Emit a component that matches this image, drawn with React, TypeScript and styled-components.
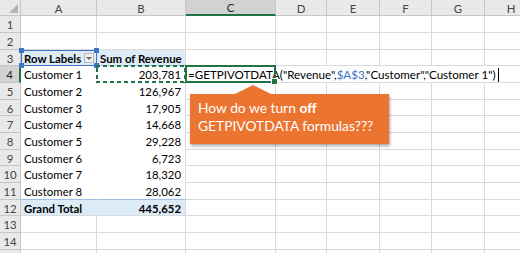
import React from 'react';
import styled, { createGlobalStyle, css } from 'styled-components';

const Global = createGlobalStyle`
  html, body { margin: 0; padding: 0; background: #ffffff; }
  body { width: 520px; height: 253px; overflow: hidden; }
`;

const GREEN = '#217346';
const GRID = '#dadada';
const HEAD_LINE = '#c6c6c6';
const PIVOT_FILL = '#ddebf7';
const PIVOT_LINE = '#9bc2e6';

const Viewport = styled.div`
  width: 520px;
  height: 253px;
  overflow: hidden;
`;

const Sheet = styled.div`
  position: relative;
  width: 538px;
  display: grid;
  grid-template-columns: 21px 76px 89px 90px 51px 53px 52px 53px 53px;
  grid-template-rows: 16px repeat(5, 17px 17px 16px);
  font-family: Lato, 'Liberation Sans', sans-serif;
  font-size: 11.4px;
  color: #000;
`;

const headBase = css`
  box-sizing: border-box;
  display: flex;
  align-items: center;
  justify-content: center;
  background: #e9e9e9;
  color: #444;
  border-right: 1px solid ${HEAD_LINE};
  border-bottom: 1px solid ${HEAD_LINE};
`;

const Corner = styled.div`
  ${headBase};
  position: relative;
  &::after {
    content: '';
    position: absolute;
    right: 2px;
    bottom: 2px;
    border-left: 9px solid transparent;
    border-bottom: 9px solid #b4b4b4;
  }
`;

const ColHead = styled.div<{ $active?: boolean }>`
  ${headBase};
  padding-top: 1px;
  ${(p) =>
    p.$active &&
    css`
      background: #d2d2d2;
      border-bottom: 2px solid ${GREEN};
      color: #262626;
    `}
`;

const RowHead = styled.div<{ $active?: boolean }>`
  ${headBase};
  padding-top: 1px;
  ${(p) =>
    p.$active &&
    css`
      background: #d2d2d2;
      border-right: 2px solid ${GREEN};
      color: #262626;
    `}
`;

type Kind = 'plain' | 'pivotHead' | 'pivotBody' | 'total';

const Cell = styled.div<{
  $kind?: Kind;
  $align?: 'left' | 'right';
  $bold?: boolean;
  $noRight?: boolean;
  $closeBody?: boolean;
}>`
  position: relative;
  box-sizing: border-box;
  display: flex;
  align-items: center;
  justify-content: ${(p) => (p.$align === 'right' ? 'flex-end' : 'flex-start')};
  padding: 1px 4px 0 3px;
  white-space: nowrap;
  font-weight: ${(p) => (p.$bold ? 700 : 400)};
  border-right: 1px solid ${(p) => (p.$noRight ? 'transparent' : GRID)};
  border-bottom: 1px solid ${GRID};
  ${(p) =>
    p.$kind === 'pivotHead' &&
    css`
      background: ${PIVOT_FILL};
      border-bottom-color: ${PIVOT_LINE};
    `}
  ${(p) =>
    p.$kind === 'pivotBody' &&
    css`
      background: #fff;
      border-bottom-color: ${p.$closeBody ? PIVOT_LINE : '#fff'};
    `}
  ${(p) =>
    p.$kind === 'total' &&
    css`
      background: ${PIVOT_FILL};
    `}
`;

const FilterButton = styled.span`
  position: relative;
  margin-left: auto;
  margin-right: -2px;
  width: 10px;
  height: 10px;
  box-sizing: border-box;
  border: 1px solid #b9b9b9;
  background: #eeeeee;
  &::after {
    content: '';
    position: absolute;
    left: 1px;
    top: 3px;
    border-left: 3px solid transparent;
    border-right: 3px solid transparent;
    border-top: 3px solid #6a6a6a;
  }
`;

const RangeMark = styled.span`
  position: absolute;
  top: 0;
  left: 0;
  right: -1px;
  bottom: -1px;
  border: 1px solid #3e73c8;
  z-index: 5;
  pointer-events: none;
`;

const Handle = styled.span<{ $x: 'left' | 'right'; $y: 'top' | 'bottom' }>`
  position: absolute;
  width: 5px;
  height: 5px;
  background: #3e73c8;
  ${(p) => p.$x}: -3px;
  ${(p) => p.$y}: -3px;
`;

const Marquee = styled.span`
  position: absolute;
  top: -1px;
  left: -1px;
  right: -1px;
  bottom: -1px;
  z-index: 5;
  pointer-events: none;
  background-image: linear-gradient(90deg, ${GREEN} 60%, transparent 0),
    linear-gradient(90deg, ${GREEN} 60%, transparent 0),
    linear-gradient(0deg, ${GREEN} 60%, transparent 0),
    linear-gradient(0deg, ${GREEN} 60%, transparent 0);
  background-repeat: repeat-x, repeat-x, repeat-y, repeat-y;
  background-size: 7px 2px, 7px 2px, 2px 7px, 2px 7px;
  background-position: left top, left bottom, left top, right top;
`;

const ActiveFrame = styled.span`
  position: absolute;
  top: -1px;
  left: -1px;
  right: -1px;
  bottom: -1px;
  border: 2px solid ${GREEN};
  z-index: 6;
  pointer-events: none;
`;

const FillHandle = styled.span`
  position: absolute;
  right: -4px;
  bottom: -4px;
  width: 5px;
  height: 5px;
  background: ${GREEN};
  border: 1px solid #fff;
`;

const FormulaText = styled.span`
  position: relative;
  z-index: 3;
  display: inline-flex;
  align-items: center;
  margin-left: -1px;
  font-size: 11.6px;
`;

const Ref = styled.span`
  color: #3a6fcb;
`;

const Caret = styled.span`
  display: inline-block;
  width: 1px;
  height: 14px;
  margin-left: 2px;
  background: #000;
`;

const Callout = styled.div`
  position: absolute;
  left: 190px;
  top: 94px;
  width: 199px;
  box-sizing: border-box;
  padding: 5px 8px 9px;
  background: #ec7431;
  color: #fff;
  font-family: Lato, 'Liberation Sans', sans-serif;
  font-size: 13.8px;
  line-height: 18px;
  z-index: 10;
  box-shadow: 1px 2px 3px rgba(0, 0, 0, 0.35);
  &::before {
    content: '';
    position: absolute;
    left: 45px;
    top: -9px;
    border-left: 18px solid transparent;
    border-right: 18px solid transparent;
    border-bottom: 9px solid #ec7431;
  }
`;

const Strong = styled.b`
  font-weight: 700;
`;

const COLS = ['A', 'B', 'C', 'D', 'E', 'F', 'G', 'H'];
const ROWS = Array.from({ length: 15 }, (_, i) => i + 1);
const DATA: Record<number, [string, string]> = {
  4: ['Customer 1', '203,781'],
  5: ['Customer 2', '126,967'],
  6: ['Customer 3', '17,905'],
  7: ['Customer 4', '14,668'],
  8: ['Customer 5', '29,228'],
  9: ['Customer 6', '6,723'],
  10: ['Customer 7', '18,320'],
  11: ['Customer 8', '28,062'],
};

function rest(r: number, from: number) {
  return COLS.slice(from).map((c) => (
    <Cell key={c + r} $noRight={r === 4 && c !== 'H'} />
  ));
}

function renderRow(r: number) {
  if (r === 3) {
    return [
      <Cell key="A3" $kind="pivotHead" $bold $noRight>
        Row Labels
        <FilterButton />
        <RangeMark>
          <Handle $x="left" $y="top" />
          <Handle $x="right" $y="top" />
          <Handle $x="left" $y="bottom" />
          <Handle $x="right" $y="bottom" />
        </RangeMark>
      </Cell>,
      <Cell key="B3" $kind="pivotHead" $bold>
        Sum of Revenue
      </Cell>,
      ...rest(r, 2),
    ];
  }
  if (DATA[r]) {
    const [label, value] = DATA[r];
    const cells = [
      <Cell key={'A' + r} $kind="pivotBody" $noRight $closeBody={r === 11}>
        {label}
      </Cell>,
      <Cell key={'B' + r} $kind="pivotBody" $align="right" $closeBody={r === 11}>
        {value}
        {r === 4 && <Marquee />}
      </Cell>,
    ];
    if (r === 4) {
      cells.push(
        <Cell key="C4" $noRight>
          <FormulaText>
            =GETPIVOTDATA("Revenue",<Ref>$A$3</Ref>,"Customer","Customer 1")
            <Caret />
          </FormulaText>
          <ActiveFrame>
            <FillHandle />
          </ActiveFrame>
        </Cell>
      );
      return [...cells, ...rest(r, 3)];
    }
    return [...cells, ...rest(r, 2)];
  }
  if (r === 12) {
    return [
      <Cell key="A12" $kind="total" $bold $noRight>
        Grand Total
      </Cell>,
      <Cell key="B12" $kind="total" $bold $align="right">
        445,652
      </Cell>,
      ...rest(r, 2),
    ];
  }
  return rest(r, 0);
}

export default function App() {
  return (
    <>
      <Global />
      <Viewport>
        <Sheet>
          <Corner />
          {COLS.map((c) => (
            <ColHead key={c} $active={c === 'C'}>
              {c}
            </ColHead>
          ))}
          {ROWS.map((r) => (
            <React.Fragment key={r}>
              <RowHead $active={r === 4}>{r}</RowHead>
              {renderRow(r)}
            </React.Fragment>
          ))}
          <Callout>
            How do we turn <Strong>off</Strong>
            <br />
            GETPIVOTDATA formulas???
          </Callout>
        </Sheet>
      </Viewport>
    </>
  );
}
